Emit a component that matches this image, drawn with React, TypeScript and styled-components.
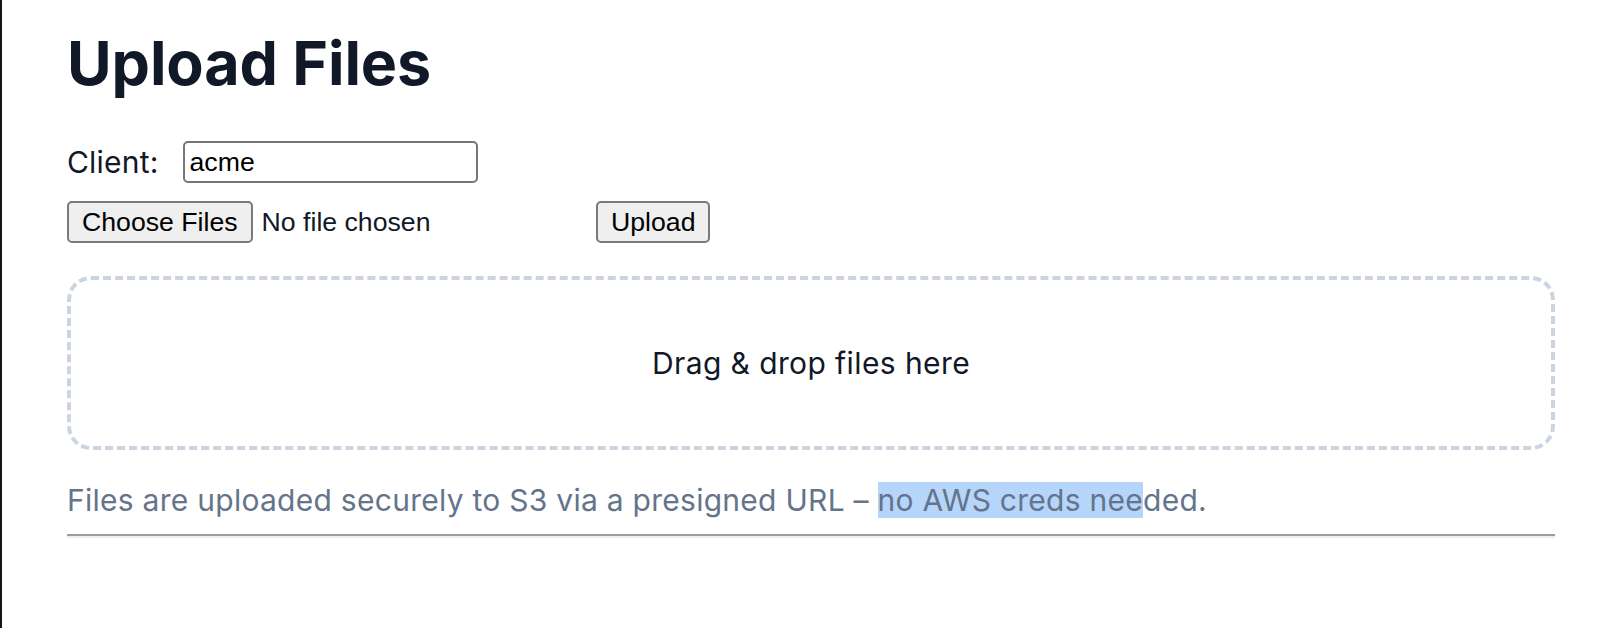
import React from "react";
import styled, { createGlobalStyle } from "styled-components";

const GlobalStyle = createGlobalStyle`
  html, body {
    margin: 0;
    padding: 0;
    background: #ffffff;
  }
  body {
    font-family: Inter, "Noto Sans", "Liberation Sans", sans-serif;
    color: #111827;
  }
`;

const Page = styled.main`
  box-sizing: border-box;
  min-height: 628px;
  border-left: 2px solid #141416;
  padding: 27px 61px 0 65px;
  display: flex;
  flex-direction: column;
`;

const Title = styled.h1`
  margin: 0;
  font-size: 61px;
  line-height: 72px;
  font-weight: 700;
  color: #111827;
  letter-spacing: -0.1px;
`;

const Form = styled.form`
  display: flex;
  flex-direction: column;
  gap: 18px;
  margin-top: 42px;
`;

const Row = styled.div`
  display: flex;
  align-items: center;
`;

const Label = styled.label`
  font-size: 30px;
  line-height: 36px;
  letter-spacing: 0.2px;
  color: #111827;
  margin-right: 24px;
`;

const TextInput = styled.input`
  box-sizing: border-box;
  width: 295px;
  height: 42px;
  padding: 0 5px;
  border: 2px solid #767676;
  border-radius: 5px;
  font-family: "Liberation Sans", Arial, sans-serif;
  font-size: 26.67px;
  color: #000000;
  background: #ffffff;
  outline: none;
`;

const FilePicker = styled.label`
  display: flex;
  align-items: center;
  width: 529px;
  cursor: pointer;
`;

const HiddenFile = styled.input`
  display: none;
`;

const NativeButton = styled.span`
  box-sizing: border-box;
  display: inline-flex;
  align-items: center;
  justify-content: center;
  height: 42px;
  padding: 0 13px;
  border: 2px solid #7a7a7a;
  border-radius: 5px;
  background: #efefef;
  font-family: "Liberation Sans", Arial, sans-serif;
  font-size: 26.67px;
  color: #000000;
  white-space: nowrap;
`;

const UploadButton = styled(NativeButton).attrs({ as: "button", type: "button" })`
  cursor: pointer;
`;

const FileName = styled.span`
  margin-left: 9px;
  font-family: "Liberation Sans", Arial, sans-serif;
  font-size: 26.67px;
  color: #111827;
  white-space: nowrap;
`;

const DropZone = styled.div`
  box-sizing: border-box;
  margin-top: 33px;
  height: 174px;
  border: 4px dashed #cbd5e1;
  border-radius: 24px;
  display: flex;
  align-items: center;
  justify-content: center;
  font-size: 30px;
  letter-spacing: 0.4px;
  color: #111827;
`;

const Note = styled.p`
  margin: 31px 0 0;
  font-size: 30px;
  line-height: 38px;
  letter-spacing: 0.27px;
  color: #64748b;
  white-space: nowrap;
`;

const Selected = styled.span`
  background: #b6d5fb;
`;

const Rule = styled.hr`
  margin: 15px 0 0;
  border: 0;
  border-top: 2px solid #9d9d9d;
  border-bottom: 2px solid #eeeeee;
`;

export default function App() {
  return (
    <>
      <GlobalStyle />
      <Page>
        <Title>Upload Files</Title>
        <Form onSubmit={(e) => e.preventDefault()}>
          <Row>
            <Label htmlFor="client">Client:</Label>
            <TextInput id="client" defaultValue="acme" />
          </Row>
          <Row>
            <FilePicker>
              <HiddenFile type="file" multiple />
              <NativeButton>Choose Files</NativeButton>
              <FileName>No file chosen</FileName>
            </FilePicker>
            <UploadButton>Upload</UploadButton>
          </Row>
        </Form>
        <DropZone>Drag &amp; drop files here</DropZone>
        <Note>
          Files are uploaded securely to S3 via a presigned URL –{" "}
          <Selected>no AWS creds nee</Selected>ded.
        </Note>
        <Rule />
      </Page>
    </>
  );
}
